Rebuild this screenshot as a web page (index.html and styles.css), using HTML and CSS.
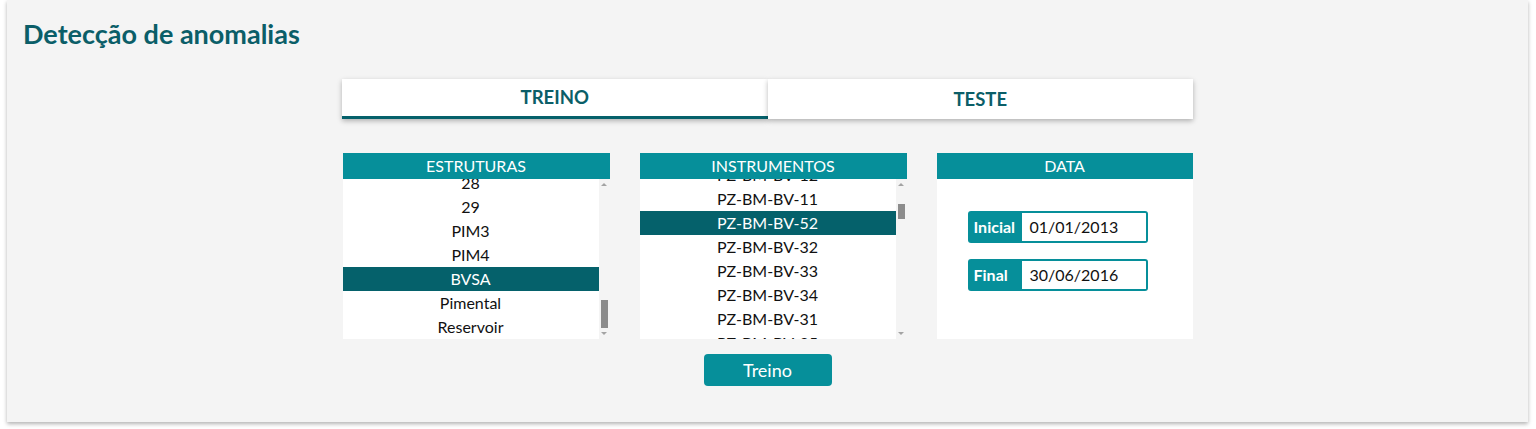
FILE: index.html
```html
<!DOCTYPE html>
<html lang="pt">
<head>
<meta charset="utf-8">
<title>Detecção de anomalias</title>
<link rel="stylesheet" href="styles.css">
</head>
<body>
<div class="card">
  <h1 class="title">Detecção de anomalias</h1>
  <div class="tabs">
    <div class="tab active">TREINO</div>
    <div class="tab">TESTE</div>
  </div>
  <div class="panels">
    <div class="panel wide">
      <div class="phead">ESTRUTURAS</div>
      <div class="pbody">
        <div class="list" style="--offset:-8px">
          <div class="item">28</div>
          <div class="item">29</div>
          <div class="item">PIM3</div>
          <div class="item">PIM4</div>
          <div class="item sel">BVSA</div>
          <div class="item">Pimental</div>
          <div class="item">Reservoir</div>
        </div>
        <div class="sb">
          <div class="up"></div>
          <div class="thumb" style="margin-top:114px;height:28px"></div>
          <div class="down"></div>
        </div>
      </div>
    </div>
    <div class="panel wide">
      <div class="phead">INSTRUMENTOS</div>
      <div class="pbody">
        <div class="list" style="--offset:-16px">
          <div class="item">PZ-BM-BV-12</div>
          <div class="item">PZ-BM-BV-11</div>
          <div class="item sel">PZ-BM-BV-52</div>
          <div class="item">PZ-BM-BV-32</div>
          <div class="item">PZ-BM-BV-33</div>
          <div class="item">PZ-BM-BV-34</div>
          <div class="item">PZ-BM-BV-31</div>
          <div class="item">PZ-BM-BV-35</div>
        </div>
        <div class="sb">
          <div class="up"></div>
          <div class="thumb" style="margin-top:18px;height:15px"></div>
          <div class="down"></div>
        </div>
      </div>
    </div>
    <div class="panel">
      <div class="phead">DATA</div>
      <div class="pbody dates">
        <div class="field">
          <span class="lbl">Inicial</span>
          <span class="val">01/01/2013</span>
        </div>
        <div class="field">
          <span class="lbl">Final</span>
          <span class="val">30/06/2016</span>
        </div>
      </div>
    </div>
  </div>
  <div class="actions">
    <button class="btn">Treino</button>
  </div>
</div>
</body>
</html>
```
FILE: styles.css
```css
* { box-sizing: border-box; }
html, body { margin: 0; padding: 0; background: #ffffff; }
body {
  font-family: Lato, "Liberation Sans", sans-serif;
  min-height: 429px;
  padding-bottom: 7px;
}

.card {
  margin-left: 7px;
  width: 1521px;
  height: 422px;
  background: #f4f4f4;
  box-shadow: 0 2px 4px rgba(0, 0, 0, 0.3);
  padding: 17px 16px 0 16px;
}

.title {
  margin: 0;
  font-size: 27px;
  line-height: 34px;
  font-weight: 700;
  color: #0b5e68;
}

.tabs {
  width: 851px;
  margin: 28px auto 0;
  display: flex;
  height: 40px;
}
.tab {
  flex: 1;
  background: #fff;
  box-shadow: 0 2px 5px rgba(0, 0, 0, 0.28);
  text-align: center;
  font-weight: 700;
  font-size: 18.5px;
  line-height: 40px;
  color: #0b5e68;
}
.tab.active {
  border-bottom: 3px solid #05616b;
  line-height: 37px;
}

.panels {
  width: 850px;
  margin: 34px auto 0;
  display: flex;
  gap: 30px;
}
.panel { width: 256px; display: flex; flex-direction: column; }
.panel.wide { width: 267px; }
.phead {
  height: 26px;
  line-height: 26px;
  background: #068f9a;
  color: #fff;
  text-align: center;
  font-size: 16px;
}
.pbody {
  height: 160px;
  display: flex;
  background: #fff;
}
.list {
  width: 256px;
  height: 160px;
  overflow: hidden;
}
.list .item:first-child { margin-top: var(--offset); }
.item {
  height: 24px;
  line-height: 24px;
  text-align: center;
  font-size: 16px;
  color: #111;
}
.item.sel { background: #05616b; color: #fff; }

.sb {
  width: 11px;
  height: 160px;
  background: #f4f4f4;
  display: flex;
  flex-direction: column;
  align-items: center;
  padding: 4px 0;
}
.up {
  width: 0; height: 0;
  border-left: 3px solid transparent;
  border-right: 3px solid transparent;
  border-bottom: 3px solid #a3a3a3;
}
.down {
  margin-top: auto;
  width: 0; height: 0;
  border-left: 3px solid transparent;
  border-right: 3px solid transparent;
  border-top: 3px solid #a3a3a3;
}
.thumb { width: 7px; background: #8c8c8c; }

.dates {
  flex-direction: column;
  padding: 32px 0 0 31px;
  gap: 16px;
}
.field {
  display: flex;
  width: 180px;
  height: 32px;
}
.lbl {
  width: 54px;
  background: #068f9a;
  color: #fff;
  font-weight: 700;
  font-size: 16px;
  line-height: 32px;
  padding-left: 6px;
  border-radius: 3px 0 0 3px;
}
.val {
  flex: 1;
  border: 2px solid #068f9a;
  border-left: none;
  border-radius: 0 3px 3px 0;
  background: #fff;
  font-size: 16px;
  line-height: 28px;
  padding-left: 8px;
  color: #111;
}

.actions {
  display: flex;
  justify-content: center;
  margin-top: 15px;
}
.btn {
  width: 128px;
  height: 32px;
  border: none;
  border-radius: 4px;
  background: #068f9a;
  color: #fff;
  font-family: Lato, "Liberation Sans", sans-serif;
  font-size: 18px;
  padding: 0;
}
```
